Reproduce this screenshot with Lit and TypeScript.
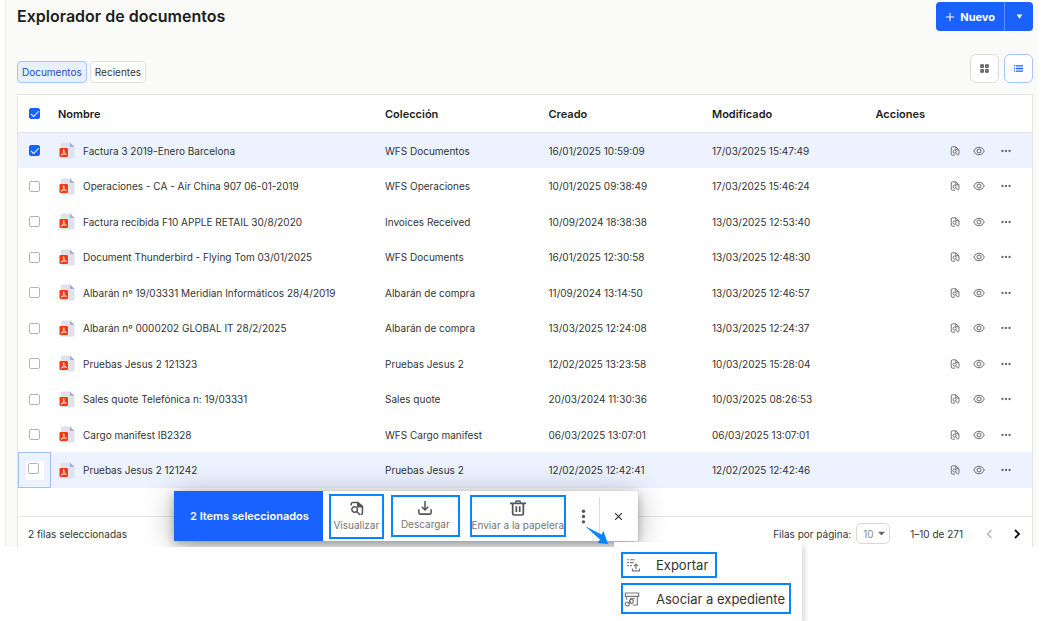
import { LitElement, html, css, svg } from "lit";
import { customElement, state } from "lit/decorators.js";
import { classMap } from "lit/directives/class-map.js";

interface DocRow {
  name: string;
  collection: string;
  created: string;
  modified: string;
  selected?: boolean;
  focused?: boolean;
}

const ROWS: DocRow[] = [
  { name: "Factura 3 2019-Enero Barcelona", collection: "WFS Documentos", created: "16/01/2025 10:59:09", modified: "17/03/2025 15:47:49", selected: true },
  { name: "Operaciones - CA - Air China 907 06-01-2019", collection: "WFS Operaciones", created: "10/01/2025 09:38:49", modified: "17/03/2025 15:46:24" },
  { name: "Factura recibida F10 APPLE RETAIL 30/8/2020", collection: "Invoices Received", created: "10/09/2024 18:38:38", modified: "13/03/2025 12:53:40" },
  { name: "Document Thunderbird - Flying Tom 03/01/2025", collection: "WFS Documents", created: "16/01/2025 12:30:58", modified: "13/03/2025 12:48:30" },
  { name: "Albarán nº 19/03331 Meridian Informáticos 28/4/2019", collection: "Albarán de compra", created: "11/09/2024 13:14:50", modified: "13/03/2025 12:46:57" },
  { name: "Albarán nº 0000202 GLOBAL IT 28/2/2025", collection: "Albarán de compra", created: "13/03/2025 12:24:08", modified: "13/03/2025 12:24:37" },
  { name: "Pruebas Jesus 2 121323", collection: "Pruebas Jesus 2", created: "12/02/2025 13:23:58", modified: "10/03/2025 15:28:04" },
  { name: "Sales quote Telefónica n: 19/03331", collection: "Sales quote", created: "20/03/2024 11:30:36", modified: "10/03/2025 08:26:53" },
  { name: "Cargo manifest IB2328", collection: "WFS Cargo manifest", created: "06/03/2025 13:07:01", modified: "06/03/2025 13:07:01" },
  { name: "Pruebas Jesus 2 121242", collection: "Pruebas Jesus 2", created: "12/02/2025 12:42:41", modified: "12/02/2025 12:42:46", focused: true },
];

const icon = (size: number, body: unknown) => html`<svg width=${size} height=${size} viewBox="0 0 24 24" fill="none" aria-hidden="true">${body}</svg>`;

const findInPage = svg`<g stroke="currentColor" stroke-width="2.400" stroke-linejoin="round">
  <path d="M3.500 7V5.500C3.500 3.500 4.500 2.500 6.500 2.500H14L21.500 9V18.500C21.500 20 20.500 21.500 19 21.500"/>
  <path d="M14 2.500V9H21.500Z" fill="currentColor"/>
  <circle cx="9" cy="13.500" r="4.500"/>
  <path d="M12.300 16.700L18 22.500"/></g>`;
const findInPageSmall = svg`<g stroke="currentColor" stroke-width="2.200" stroke-linejoin="round">
  <path d="M3 14V5C3 3 4 2 6 2H14L21.500 9V18.500C21.500 20 20.500 21.500 19 21.500M3 14V19C3 21 4 22 6 22H12"/>
  <path d="M14 2V9H21.500"/>
  <circle cx="11" cy="13.500" r="3.800"/>
  <path d="M13.700 16.500L19 22.500"/></g>`;
const eye = svg`<g stroke="currentColor" stroke-width="2"><path d="M1.500 12C4 7 7.700 4.500 12 4.500S20 7 22.500 12C20 17 16.300 19.500 12 19.500S4 17 1.500 12Z"/><circle cx="12" cy="12" r="4"/></g>`;
const dots = svg`<g fill="currentColor"><circle cx="3.500" cy="12" r="2.800"/><circle cx="12" cy="12" r="2.800"/><circle cx="20.500" cy="12" r="2.800"/></g>`;
const kebab = svg`<g fill="currentColor"><circle cx="12" cy="3.500" r="2.700"/><circle cx="12" cy="12" r="2.700"/><circle cx="12" cy="20.500" r="2.700"/></g>`;
const download = svg`<path d="M12 0V15M6.500 10L12 15.500L17.500 10M1.500 14V19.500C1.500 21.500 2.500 22.500 4.500 22.500H19.500C21.500 22.500 22.500 21.500 22.500 19.500V14" stroke="currentColor" stroke-width="2.600"/>`;
const trash = svg`<path d="M8.500 4V3C8.500 2 9 1.500 10 1.500H14C15 1.500 15.500 2 15.500 3V4" stroke="currentColor" stroke-width="2.400"/>
  <path d="M0 5H24M4 5V20C4 21.700 5 22.500 6.500 22.500H17.500C19 22.500 20 21.700 20 20V5M9.500 9.500V18M14.500 9.500V18" stroke="currentColor" stroke-width="2.600"/>`;
const plus = svg`<path d="M12 2V22M2 12H22" stroke="currentColor" stroke-width="2.400"/>`;
const cross = svg`<path d="M3 3L21 21M21 3L3 21" stroke="currentColor" stroke-width="3.200"/>`;
const grid = svg`<g stroke="currentColor" stroke-width="3"><rect x="2.500" y="2.500" width="6" height="6"/><rect x="15.500" y="2.500" width="6" height="6"/><rect x="2.500" y="15.500" width="6" height="6"/><rect x="15.500" y="15.500" width="6" height="6"/></g>`;
const list = svg`<path d="M0 5H3M0 12H3M0 19H3M5 5H24M5 12H24M5 19H24" stroke="currentColor" stroke-width="3.400"/>`;
const caret = svg`<path d="M2 5H22L12 20Z" fill="currentColor"/>`;
const chevLeft = svg`<path d="M15 4L7 12L15 20" stroke="currentColor" stroke-width="2.600"/>`;
const chevRight = svg`<path d="M8 4L16 12L8 20" stroke="currentColor" stroke-width="3.600"/>`;
const exportList = svg`<g stroke="currentColor" stroke-width="2"><path d="M2 3H5M7 3H15M2 8H5M7 8H13M2 13H5M7 13H10"/>
  <path d="M17 19V11M13.500 14L17 10.500L20.500 14M11 18V22H23V18"/></g>`;
const archiveLink = svg`<g stroke="currentColor" stroke-width="1.700"><path d="M2 3H22V8H2Z"/><path d="M4 8V13M20 8V21H13"/><path d="M9 11.500H16"/>
  <circle cx="11" cy="15.500" r="3"/><circle cx="5" cy="19.500" r="3"/><path d="M6 18.500L10.500 15.500"/></g>`;
const selectArrow = svg`<path d="M0 6H24L12 19Z" fill="currentColor"/>`;

@customElement("pdf-icon")
export class PdfIcon extends LitElement {
  static styles = css`
    :host { display: block; flex: none; width: 16px; height: 17px; }
    svg { display: block; }
  `;
  render() {
    return html`<svg width="16" height="17" viewBox="0 0 16 17" aria-hidden="true">
      <path d="M3.500 0.500H11L15.500 5V15C15.500 16 15 16.500 14 16.500H3.500C2.500 16.500 2 16 2 15V2C2 1 2.500 0.500 3.500 0.500Z" fill="#dfe2ea"/>
      <path d="M11 0.500L15.500 5H12C11.300 5 11 4.700 11 4Z" fill="#a5b0c8"/>
      <rect x="0.500" y="6" width="8.500" height="9" rx="1.200" fill="#f23a12"/>
      <path d="M4.700 7.700C5.400 9.500 4 12 2.200 13.400C3 12.300 5.500 11.600 7.400 12.300C5.800 11.600 4.700 10 4.700 7.700Z" stroke="#fff" stroke-width="0.800" fill="none"/>
    </svg>`;
  }
}

@customElement("app-root")
export class AppRoot extends LitElement {
  @state() private rows = ROWS;
  @state() private tab = "Documentos";

  static styles = css`
    :host {
      display: block; position: relative; box-sizing: border-box; min-height: 100vh; padding: 0 7px 0 5px;
      overflow: hidden; background: #fff; color: #333; font: 10px/16px Inter, "Liberation Sans", sans-serif;
    }
    *, *::before { box-sizing: border-box; }
    button, select { font: inherit; color: inherit; margin: 0; padding: 0; border: 0; background: none; cursor: pointer; white-space: nowrap; }
    svg { display: block; flex: none; }
    .panel { position: relative; overflow: hidden; padding: 2px 5px 0 11px; border-left: 1px solid #ebebe8; background: #fafaf8; }
    .head, .tools, .views, .tabs { display: flex; justify-content: space-between; }
    h1 { margin: 0; font-size: 16px; line-height: 28px; font-weight: 600; color: #1d1d1d; }
    .split { display: flex; height: 29px; border-radius: 4px; overflow: hidden; background: #1a62ff; color: #fff; }
    .new { display: flex; align-items: center; gap: 5px; padding: 0 9px; font-size: 11px; font-weight: 700; color: #fff; }
    .more { width: 29px; display: grid; place-items: center; border-left: 1px solid #5c90ff; color: #fff; }
    .tools { align-items: flex-end; padding: 23px 0 11px; }
    .tabs { gap: 3px; }
    .tab { height: 22px; padding: 0 4px; border: 1px solid #dedede; border-radius: 4px; background: #fff; color: #333; }
    .tab.on { border-color: #a9c4ff; background: #e8effe; color: #2350b5; }
    .views { gap: 5px; }
    .view { display: grid; place-items: center; width: 29px; height: 29px; border: 1px solid #dedede; border-radius: 6px; background: #fff; }
    .view.on { border-color: #a9c4ff; color: #1a62ff; }
    .card { border: 1px solid #e4e4e1; border-bottom: 0; border-radius: 2px 2px 0 0; background: #fff; }
    table { width: 100%; table-layout: fixed; border-collapse: separate; border-spacing: 0; }
    .c-check { width: 33px; }
    th, td { padding: 0 0 0 7px; text-align: left; vertical-align: middle; white-space: nowrap; }
    th { height: 38px; border-bottom: 1px solid #e4e4e1; font-size: 11px; font-weight: 600; color: #1d1d1d; }
    td { height: 35px; }
    tr:nth-child(even) td { height: 36px; }
    .lit td { background: #ecf2ff; }
    td.check, th.check { padding: 0 0 0 11px; }
    td.focus { border: 1px solid #a3bffa; padding: 0 0 0 7px; }
    .tick { display: block; width: 11px; }
    .focus .tick { width: 18px; padding: 2px 5px 6px 2px; background: #fff; }
    input { display: block; appearance: none; width: 11px; height: 11px; margin: 0; border: 1px solid #b5b5b5; border-radius: 2px; background: #fff; }
    input:checked { border-color: #1a62ff; background: #1a62ff; }
    input:checked::before { content: ""; display: block; width: 8px; height: 4px; margin: 2px 1px; border: solid #fff; border-width: 0 0 1px 1px; transform: rotate(-45deg); }
    .name { display: flex; align-items: center; gap: 8px; padding-left: 1px; }
    .acts { display: flex; justify-content: flex-end; gap: 12px; padding-right: 17px; color: #666; }
    .acts button { display: grid; place-items: center; width: 12px; height: 12px; }
    .acts button:last-child { width: 18px; }
    .foot { display: flex; align-items: center; height: 31px; margin-top: 28px; padding: 3px 9px 0 10px; border-top: 1px solid #e4e4e1; }
    .rowsper { display: flex; align-items: center; gap: 5px; margin-left: auto; }
    .size { position: relative; display: flex; align-items: center; }
    .size select { appearance: none; width: 34px; height: 21px; padding: 0 0 0 6px; border: 1px solid #d8d8d8; border-radius: 5px; color: #8c8c8c; background: #fff; }
    .size svg { position: absolute; right: 5px; color: #666; pointer-events: none; }
    .range { margin: 0 21px 0 20px; }
    .pager { display: flex; gap: 15px; }
    .prev { color: #b0b0b0; }
    .next { color: #111; }
    .bulk { position: absolute; left: 168px; bottom: 6px; display: flex; align-items: center; height: 50px; border-radius: 2px; background: #fff; box-shadow: 0 4px 30px rgba(0, 0, 0, 0.3), 0 3px 8px rgba(0, 0, 0, 0.25); }
    .count { align-self: stretch; display: flex; align-items: center; padding: 0 14px 0 16px; margin-right: 6px; background: #1a62ff; color: #fff; font-size: 11px; font-weight: 600; }
    .op { display: flex; flex-direction: column; align-items: center; justify-content: center; height: 42px; border: 2px solid #0a84ff; color: #757575; line-height: 14px; gap: 2px; }
    .op svg { color: #555; }
    .view-op { width: 55px; height: 45px; margin-right: 7px; }
    .down-op { width: 69px; margin-right: 10px; }
    .trash-op { width: 96px; margin-right: 10px; }
    .kebab { color: #555; }
    .close { display: grid; place-items: center; width: 39px; height: 39px; margin-left: 8px; border-left: 1px solid #dcdcdc; }
    .menu { position: absolute; left: 614px; top: 542px; width: 188px; height: 79px; padding: 10px 7px; background: #fff; box-shadow: 3px 4px 5px rgba(0, 0, 0, 0.14); }
    .item { display: flex; align-items: center; gap: 16px; height: 26px; padding: 0 7px 0 3px; border: 2px solid #0a84ff; font-size: 13px; color: #333; }
    .item svg { color: #777; }
    .item + .item { height: 31px; margin-top: 5px; padding: 0 4px 0 1px; }
    .arrow { position: absolute; left: 585px; top: 525px; color: #0a84ff; }
  `;

  private toggle(i: number) {
    this.rows = this.rows.map((r, n) => (n === i ? { ...r, selected: !r.selected } : r));
  }

  private row(r: DocRow, i: number) {
    return html`<tr class=${classMap({ lit: !!(r.selected || r.focused) })}>
      <td class=${classMap({ check: true, focus: !!r.focused })}>
        <label class="tick"><input type="checkbox" aria-label=${"Seleccionar " + r.name} .checked=${!!r.selected} @change=${() => this.toggle(i)} /></label>
      </td>
      <td colspan="2"><div class="name"><pdf-icon></pdf-icon><span>${r.name}</span></div></td>
      <td>${r.collection}</td>
      <td>${r.created}</td>
      <td>${r.modified}</td>
      <td><div class="acts">
        <button aria-label="Visualizar">${icon(10, findInPageSmall)}</button>
        <button aria-label="Ver">${icon(12, eye)}</button>
        <button aria-label="Más acciones">${icon(10, dots)}</button>
      </div></td>
    </tr>`;
  }

  render() {
    return html`
      <main class="panel">
        <header class="head">
          <h1>Explorador de documentos</h1>
          <div class="split">
            <button class="new">${icon(10, plus)}Nuevo</button>
            <button class="more" aria-label="Más opciones">${icon(7, caret)}</button>
          </div>
        </header>
        <div class="tools">
          <nav class="tabs">
            ${["Documentos", "Recientes"].map((t) => html`<button class=${classMap({ tab: true, on: this.tab === t })} @click=${() => (this.tab = t)}>${t}</button>`)}
          </nav>
          <div class="views">
            <button class="view" aria-label="Cuadrícula">${icon(9, grid)}</button>
            <button class="view on" aria-label="Lista">${icon(9, list)}</button>
          </div>
        </div>
        <section class="card">
          <table>
            <colgroup><col class="c-check" /><col /><col /><col /><col /><col /><col /></colgroup>
            <thead><tr>
              <th class="check"><input type="checkbox" aria-label="Seleccionar todo" checked /></th>
              <th colspan="2">Nombre</th><th>Colección</th><th>Creado</th><th>Modificado</th><th>Acciones</th>
            </tr></thead>
            <tbody>${this.rows.map((r, i) => this.row(r, i))}</tbody>
          </table>
          <footer class="foot">
            <span>2 filas seleccionadas</span>
            <div class="rowsper">
              <label for="size">Filas por página:</label>
              <span class="size"><select id="size"><option>10</option><option>25</option><option>50</option></select>${icon(7, selectArrow)}</span>
            </div>
            <span class="range">1–10 de 271</span>
            <div class="pager">
              <button class="prev" aria-label="Página anterior" disabled>${icon(12, chevLeft)}</button>
              <button class="next" aria-label="Página siguiente">${icon(12, chevRight)}</button>
            </div>
          </footer>
        </section>
        <div class="bulk">
          <span class="count">2 Items seleccionados</span>
          <button class="op view-op">${icon(15, findInPage)}Visualizar</button>
          <button class="op down-op">${icon(14, download)}Descargar</button>
          <button class="op trash-op">${icon(16, trash)}Enviar a la papelera</button>
          <button class="kebab" aria-label="Más">${icon(15, kebab)}</button>
          <button class="close" aria-label="Cerrar">${icon(9, cross)}</button>
        </div>
      </main>
      <div class="menu">
        <button class="item">${icon(14, exportList)}Exportar</button>
        <button class="item">${icon(16, archiveLink)}Asociar a expediente</button>
      </div>
      <svg class="arrow" width="24" height="20" viewBox="0 0 24 20" aria-hidden="true"><path d="M0 1L16.500 9.500L18.500 6L23 19L12.500 18L15 14.500Z" fill="currentColor"/></svg>
    `;
  }
}
